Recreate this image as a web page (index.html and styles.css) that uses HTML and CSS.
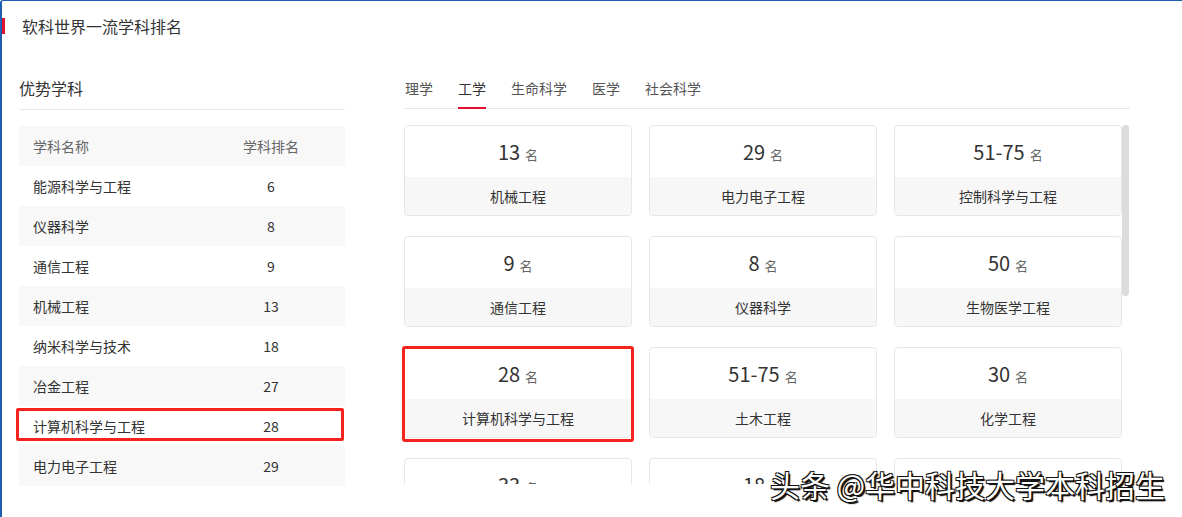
FILE: index.html
```html
<!DOCTYPE html>
<html><head><meta charset="utf-8">
<title>软科世界一流学科排名</title>
<link rel="stylesheet" href="styles.css">
</head><body>
<div class="page">
	<div class="title">软科世界一流学科排名</div>

	<div class="main">
		<div class="left">
			<div class="sub">优势学科</div>
			<div class="tbl">
				<div class="tr th"><span>学科名称</span><span>学科排名</span></div>
				<div class="tr"><span>能源科学与工程</span><span>6</span></div>
				<div class="tr"><span>仪器科学</span><span>8</span></div>
				<div class="tr"><span>通信工程</span><span>9</span></div>
				<div class="tr"><span>机械工程</span><span>13</span></div>
				<div class="tr"><span>纳米科学与技术</span><span>18</span></div>
				<div class="tr"><span>冶金工程</span><span>27</span></div>
				<div class="tr mark"><span>计算机科学与工程</span><span>28</span></div>
				<div class="tr"><span>电力电子工程</span><span>29</span></div>
			</div>
		</div>

		<div class="right">
			<div class="tabs">
				<span class="tab">理学</span>
				<span class="tab on">工学</span>
				<span class="tab">生命科学</span>
				<span class="tab">医学</span>
				<span class="tab">社会科学</span>
			</div>
			<div class="scroll">
				<div class="cards">
					<div class="card"><div class="rk">13<small>名</small></div><div class="nm">机械工程</div></div>
					<div class="card"><div class="rk">29<small>名</small></div><div class="nm">电力电子工程</div></div>
					<div class="card"><div class="rk">51-75<small>名</small></div><div class="nm">控制科学与工程</div></div>
					<div class="card"><div class="rk">9<small>名</small></div><div class="nm">通信工程</div></div>
					<div class="card"><div class="rk">8<small>名</small></div><div class="nm">仪器科学</div></div>
					<div class="card"><div class="rk">50<small>名</small></div><div class="nm">生物医学工程</div></div>
					<div class="card mark"><div class="rk">28<small>名</small></div><div class="nm">计算机科学与工程</div></div>
					<div class="card"><div class="rk">51-75<small>名</small></div><div class="nm">土木工程</div></div>
					<div class="card"><div class="rk">30<small>名</small></div><div class="nm">化学工程</div></div>
					<div class="card"><div class="rk">33<small>名</small></div><div class="nm">冶金工程</div></div>
					<div class="card"><div class="rk">18<small>名</small></div><div class="nm">纳米科学与技术</div></div>
					<div class="card"><div class="rk">6<small>名</small></div><div class="nm">能源科学与工程</div></div>
				</div>
				<div class="track"><div class="thumb"></div></div>
			</div>
		</div>
	</div>

	<div class="wm">头条 @华中科技大学本科招生</div>
</div>
</body></html>
```

FILE: styles.css
```css
html, body {
	margin: 0;
	background: #fff;
}
body {
	font-family: "Noto Sans CJK SC", "Liberation Sans", sans-serif;
	color: #333;
	overflow: hidden;
}
.page {
	position: relative;
	height: 516px;
	border-top: 1px solid #1f5fb3;
	border-left: 2px solid #1f5fb3;
	border-top-left-radius: 3px;
}
.title {
	margin-top: 17px;
	height: 16px;
	line-height: 16px;
	font-size: 16px;
	padding-left: 17px;
	border-left: 3px solid #e0102e;
}
.main {
	display: flex;
	align-items: flex-start;
	margin-top: 44px;
	padding-left: 17px;
}
.left {
	width: 326px;
}
.sub {
	font-size: 16px;
	line-height: 20px;
	padding-bottom: 11px;
	border-bottom: 1px solid #e8e8e8;
}
.tbl {
	position: relative;
	margin-top: 16px;
}
.tr {
	display: grid;
	grid-template-columns: 178px 1fr;
	height: 40px;
	line-height: 40px;
	font-size: 14px;
}
.tr span:first-child {
	padding-left: 14px;
}
.tr span:last-child {
	text-align: center;
}
.tr:nth-child(odd) {
	background: #f8f8f8;
}
.th {
	color: #666;
}
.tr.mark {
	position: relative;
}
.tr.mark::after {
	content: "";
	position: absolute;
	left: -3px;
	right: 1px;
	top: 2px;
	bottom: 5px;
	border: 3px solid #f5231c;
	border-radius: 2px;
}
.right {
	width: 726px;
	margin-left: 59px;
}
.tabs {
	display: flex;
	gap: 25px;
	padding-left: 1px;
	border-bottom: 1px solid #e8e8e8;
}
.tab {
	font-size: 14px;
	line-height: 20px;
	padding-bottom: 9px;
	margin-bottom: -1px;
	border-bottom: 2px solid transparent;
	color: #555;
}
.tab.on {
	color: #333;
	border-bottom-color: #e0102e;
}
.scroll {
	display: flex;
	justify-content: space-between;
	margin: 16px 0 0 -3px;
	padding-left: 3px;
	height: 359px;
	overflow: hidden;
}
.cards {
	display: grid;
	grid-template-columns: repeat(3, 228px);
	column-gap: 17px;
	row-gap: 20px;
	align-content: start;
}
.card {
	position: relative;
	height: 89px;
	border: 1px solid #e6e6e6;
	border-radius: 4px;
}
.rk {
	height: 51px;
	line-height: 51px;
	text-align: center;
	font-size: 20px;
	color: #333;
}
.rk small {
	font-size: 13px;
	color: #666;
	margin-left: 5px;
}
.nm {
	height: 38px;
	line-height: 38px;
	text-align: center;
	font-size: 14px;
	background: #f7f7f7;
	border-radius: 0 0 4px 4px;
}
.card.mark::after {
	content: "";
	position: absolute;
	left: -3px;
	right: -3px;
	top: -2px;
	bottom: -5px;
	border: 3px solid #f5231c;
	border-radius: 3px;
}
.track {
	width: 8px;
}
.thumb {
	width: 7px;
	height: 171px;
	background: #dcdcdc;
	border-radius: 4px;
}
.wm {
	position: absolute;
	left: 768px;
	top: 463px;
	font-size: 30px;
	line-height: 40px;
	color: #fff;
	white-space: nowrap;
	text-shadow: 1px 1px 0 #111, -1px -1px 0 #111, 1px -1px 0 #111, -1px 1px 0 #111, 2px 2px 1px #000;
}
```
